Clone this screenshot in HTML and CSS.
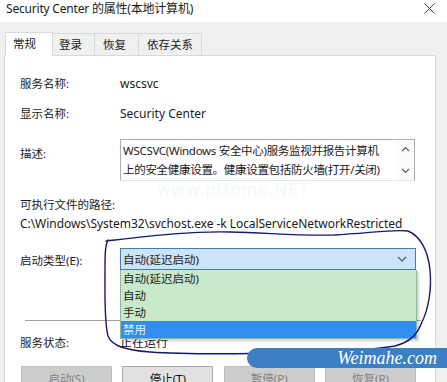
FILE: index.html
```html
<!DOCTYPE html>
<html lang="zh-CN">
<head>
  <meta charset="UTF-8" />
  <title>Security Center 的属性(本地计算机)</title>
  <link rel="stylesheet" href="styles.css">
</head>
<body>

<div class="window">

  <!-- title bar -->
  <div class="titlebar">
    <span class="title">Security Center 的属性(本地计算机)</span>
    <svg class="close" width="11" height="11" viewBox="0 0 11 11">
      <path d="M0.5 0.5 L10.5 10.5 M10.5 0.5 L0.5 10.5" stroke="#444" stroke-width="1" fill="none"/>
    </svg>
  </div>

  <!-- tabs -->
  <div class="tabs">
    <div class="tab active">常规</div>
    <div class="tab">登录</div>
    <div class="tab">恢复</div>
    <div class="tab">依存关系</div>
  </div>

  <!-- general page -->
  <div class="panel">
    <div class="row name-row">
      <span class="label">服务名称:</span>
      <span class="value">wscsvc</span>
    </div>
    <div class="row display-row">
      <span class="label">显示名称:</span>
      <span class="value">Security Center</span>
    </div>
    <div class="row desc-row">
      <span class="label">描述:</span>
      <div class="desc-box">
        <div class="desc-text">WSCSVC(Windows 安全中心)服务监视并报告计算机上的安全健康设置。健康设置包括防火墙(打开/关闭)</div>
        <div class="desc-scroll">
          <svg width="9" height="6" viewBox="0 0 9 6"><path d="M1 5 L4.5 1.5 L8 5" stroke="#555" stroke-width="1.2" fill="none"/></svg>
          <svg width="9" height="6" viewBox="0 0 9 6"><path d="M1 1 L4.5 4.5 L8 1" stroke="#555" stroke-width="1.2" fill="none"/></svg>
        </div>
      </div>
    </div>

    <div class="path-label">可执行文件的路径:</div>
    <div class="path">C:\Windows\System32\svchost.exe -k LocalServiceNetworkRestricted</div>

    <div class="row startup-row">
      <span class="label">启动类型(E):</span>
      <div class="combo">
        <div class="combo-box">
          <span>自动(延迟启动)</span>
          <svg width="10" height="6" viewBox="0 0 10 6"><path d="M1 1 L5 5 L9 1" stroke="#555" stroke-width="1.1" fill="none"/></svg>
        </div>
        <ul class="combo-list">
          <li>自动(延迟启动)</li>
          <li>自动</li>
          <li>手动</li>
          <li class="selected">禁用</li>
        </ul>
      </div>
    </div>

    <div class="separator"></div>

    <div class="row status-row">
      <span class="label">服务状态:</span>
      <span class="value">正在运行</span>
    </div>

    <div class="buttons">
      <button class="btn" disabled>启动(S)</button>
      <button class="btn">停止(T)</button>
      <button class="btn" disabled>暂停(P)</button>
      <button class="btn" disabled>恢复(R)</button>
    </div>
  </div>

  <!-- annotations on the screenshot -->
  <div class="watermark">www.pHome.NET</div>
  <svg class="scribble" width="447" height="382" viewBox="0 0 447 382">
    <path d="M106 241 C150 236 190 231 230 232 C270 233 300 236 334 235 C370 233 395 229 408 231 C420 236 428 250 430 270 C432 290 428 310 422 322 C417 335 410 342 395 346 C370 350 330 352 290 353 C240 354 190 355 150 352 C125 350 112 346 108 336 C104 320 105 290 105 270 C105 255 105 246 108 240"
      stroke="#141a6e" stroke-width="1.4" fill="none" stroke-linecap="round"/>
  </svg>
  <div class="banner"><span>Weimahe.com</span></div>

</div>

</body>
</html>
```

FILE: styles.css
```css
body {
  margin: 0;
  padding: 0;
  background: #f0f0f0;
  font-family: "Noto Sans", "Noto Sans CJK SC", sans-serif;
  font-size: 12px;
  color: #1b1b1b;
}

.window {
  position: relative;
  width: 447px;
  height: 382px;
  overflow: hidden;
  background: #f0f0f0;
}

/* --- title bar --- */
.titlebar {
  height: 22px;
  background: #fff;
  display: flex;
  align-items: center;
  justify-content: space-between;
  padding: 0 12px 0 6px;
  box-sizing: border-box;
}

.title {
  font-size: 12px;
  line-height: 16px;
  letter-spacing: -0.2px;
  margin-top: -4px;
}

.close {
  margin-top: -6px;
}

/* --- tabs --- */
.tabs {
  display: flex;
  height: 33px;
  padding: 0 0 0 5px;
  align-items: flex-end;
  box-sizing: border-box;
}

.tab {
  height: 21px;
  line-height: 21px;
  padding: 0 8px;
  border: 1px solid #d9d9d9;
  border-bottom: none;
  margin-left: -1px;
  background: #f0f0f0;
  font-size: 11.5px;
}

.tab:nth-child(2) { width: 28px; padding: 0 7px 0 6px; }
.tab:nth-child(3) { width: 28px; padding: 0 7px 0 8px; }
.tab:nth-child(4) { width: 48px; padding: 0 6px 0 8px; }

.tab.active {
  height: 23px;
  width: 30px;
  padding: 0 9px 0 7px;
  margin-left: 0;
  background: #fff;
  position: relative;
  z-index: 1;
  margin-bottom: -1px;
}

/* --- panel --- */
.panel {
  margin-left: 4px;
  width: 432px;
  height: 330px;
  box-sizing: border-box;
  background: #fff;
  border: 1px solid #d9d9d9;
  padding: 20px 19px 0 15px;
}

.row {
  display: flex;
  align-items: center;
}

.label {
  width: 100px;
  flex: none;
  font-size: 11.5px;
  line-height: 16px;
}

.value {
  line-height: 16px;
}

.display-row {
  margin-top: 14px;
}

.desc-row {
  margin-top: 17px;
  align-items: flex-start;
}

.desc-row .label {
  margin-top: 7px;
}

.desc-box {
  width: 295px;
  height: 42px;
  box-sizing: border-box;
  border: 1px solid #adadad;
  border-bottom-color: #e3e3e3;
  display: flex;
  justify-content: space-between;
}

.desc-text {
  width: 266px;
  flex: none;
  padding: 1px 0 0 2px;
  line-height: 19px;
  font-size: 11.5px;
  letter-spacing: -0.3px;
}

.desc-scroll {
  width: 17px;
  display: flex;
  flex-direction: column;
  justify-content: space-between;
  align-items: center;
  padding: 6px 0 6px;
  background: #fbfbfb;
}

.path-label {
  margin-top: 16px;
  line-height: 16px;
  font-size: 11.5px;
}

.path {
  margin-top: 3px;
  line-height: 16px;
  letter-spacing: -0.05px;
  white-space: nowrap;
}

.startup-row {
  margin-top: 16px;
}

.startup-row .label {
  margin-top: 3px;
}

/* --- combo box (open) --- */
.combo {
  position: relative;
  width: 297px;
}

.combo-box {
  height: 22px;
  box-sizing: border-box;
  border: 1px solid #3f7fa8;
  background: #cce4f7;
  display: flex;
  align-items: center;
  justify-content: space-between;
  padding: 0 8px 0 2px;
  font-size: 11.5px;
}

.combo-list {
  position: absolute;
  top: 100%;
  left: 0;
  right: -1px;
  margin: 0;
  padding: 0;
  list-style: none;
  background: #c8eacb;
  border: 1px solid #8fb7a0;
  border-top: none;
  box-shadow: 2px 2px 2px rgba(0, 0, 0, 0.18);
  z-index: 2;
}

.combo-list li {
  height: 17px;
  line-height: 17px;
  padding-left: 2px;
  font-size: 11.5px;
}

.combo-list li.selected {
  background: #2f8ef0;
  color: #e6f0ff;
}

.separator {
  margin-top: 50px;
  margin-left: 5px;
  height: 1px;
  background: #a0a0a0;
  width: 396px;
}

.status-row {
  margin-top: 14px;
}

/* --- buttons --- */
.buttons {
  display: flex;
  justify-content: space-between;
  margin: 15px 0 0 1px;
}

.btn {
  width: 91px;
  height: 24px;
  border: 1px solid #adadad;
  background: #e1e1e1;
  font-family: inherit;
  font-size: 11.5px;
  color: #111;
  padding: 0;
}

.btn:disabled {
  background: #cccccc;
  border-color: #bfbfbf;
  color: #838383;
}

/* --- annotations --- */
.watermark {
  position: absolute;
  left: 157px;
  top: 177px;
  font-size: 17px;
  letter-spacing: 1px;
  color: #f2f9fb;
}

.scribble {
  position: absolute;
  left: 0;
  top: 0;
  z-index: 3;
  pointer-events: none;
}

.banner {
  position: absolute;
  left: 247px;
  top: 348px;
  width: 200px;
  height: 20px;
  border-radius: 10px 0 0 10px;
  background: #3c80c3;
  z-index: 4;
  display: flex;
  align-items: center;
  justify-content: flex-end;
  padding-right: 10px;
  box-sizing: border-box;
}

.banner span {
  font-family: "Liberation Serif", serif;
  font-style: italic;
  font-size: 18px;
  color: #fff;
  line-height: 20px;
}
```
